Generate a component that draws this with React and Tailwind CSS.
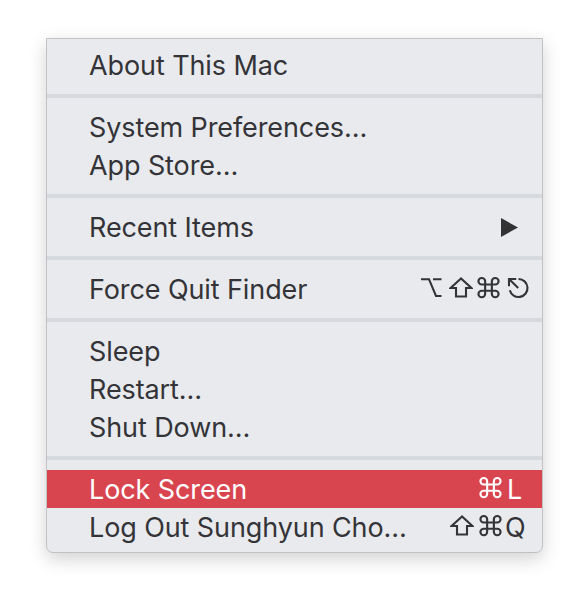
import React from "react";

const S = {
  fill: "none",
  stroke: "currentColor",
  strokeWidth: 2.1,
};

function Glyph({ name, className = "" }) {
  let body = null;
  if (name === "opt") body = <path d="M1 2.2 H9 L16 19 H21.5 M13 2.2 H21.5" {...S} />;
  if (name === "shift")
    body = <path d="M12 1.5 L1.6 11 H7 V19.5 H17 V11 H22.4 Z" {...S} strokeLinejoin="miter" />;
  if (name === "cmd")
    body = (
      <g transform="translate(11.5 10.6) scale(1.12 1.06) translate(-12 -12)">
        <path
          d="M15 6v12a3 3 0 1 0 3-3H6a3 3 0 1 0 3 3V6a3 3 0 1 0-3 3h12a3 3 0 1 0-3-3"
          {...S}
          strokeWidth={1.9}
        />
      </g>
    );
  if (name === "esc")
    body = (
      <g>
        <path d="M12.5 2 A9 9 0 1 1 3.8 13.3" {...S} />
        <path d="M3.8 2.8 L12.2 11" {...S} />
        <path d="M3 9.2 V2 H10.2" {...S} />
      </g>
    );
  return (
    <svg width="24" height="22" viewBox="0 0 24 22" className={"mb-[2px] block shrink-0 " + className}>
      {body}
    </svg>
  );
}

function Row({ label, right, active }) {
  return (
    <div
      className={
        "flex h-[38px] items-center pl-[42px] " +
        (active ? "bg-[#d9454f] text-white" : "text-[#343438]")
      }
    >
      <span className="flex-1 text-[27px] leading-none tracking-[-0.1px]">{label}</span>
      {right}
    </div>
  );
}

function Sep() {
  return <div className="my-[10px] h-[4px] bg-[#d6d9de]" />;
}

export default function App() {
  return (
    <div
      className="min-h-[608px] w-[588px] bg-white pl-[46px] pt-[38px]"
      style={{ fontFamily: 'Inter, "Noto Sans", sans-serif' }}
    >
      <div className="w-[497px] rounded-b-[7px] border border-[#c2c2c4] bg-[#e8eaee] pb-[6px] pt-[7px] shadow-[0_6px_18px_rgba(0,0,0,0.18)]">
        <Row label="About This Mac" />
        <Sep />
        <Row label="System Preferences…" />
        <Row label="App Store…" />
        <Sep />
        <Row
          label="Recent Items"
          right={
            <div className="flex w-[41px] items-center">
              <svg width="18" height="20" viewBox="0 0 18 20" className="mt-[2px] block">
                <polygon points="0,0 17,9.5 0,19" fill="#333336" />
              </svg>
            </div>
          }
        />
        <Sep />
        <Row
          label="Force Quit Finder"
          right={
            <div className="flex items-center gap-[5px] pr-[12px]">
              <Glyph name="opt" />
              <Glyph name="shift" />
              <Glyph name="cmd" className="-ml-[1px]" />
              <Glyph name="esc" />
            </div>
          }
        />
        <Sep />
        <Row label="Sleep" />
        <Row label="Restart…" />
        <Row label="Shut Down…" />
        <Sep />
        <Row
          label="Lock Screen"
          active
          right={
            <div className="flex items-center">
              <Glyph name="cmd" />
              <div className="w-[39px] pl-[4px] text-[27px] leading-none">L</div>
            </div>
          }
        />
        <Row
          label="Log Out Sunghyun Cho…"
          right={
            <div className="flex items-center">
              <Glyph name="shift" />
              <Glyph name="cmd" className="ml-[5px]" />
              <div className="w-[39px] pl-[2px] text-[27px] leading-none">Q</div>
            </div>
          }
        />
      </div>
    </div>
  );
}
